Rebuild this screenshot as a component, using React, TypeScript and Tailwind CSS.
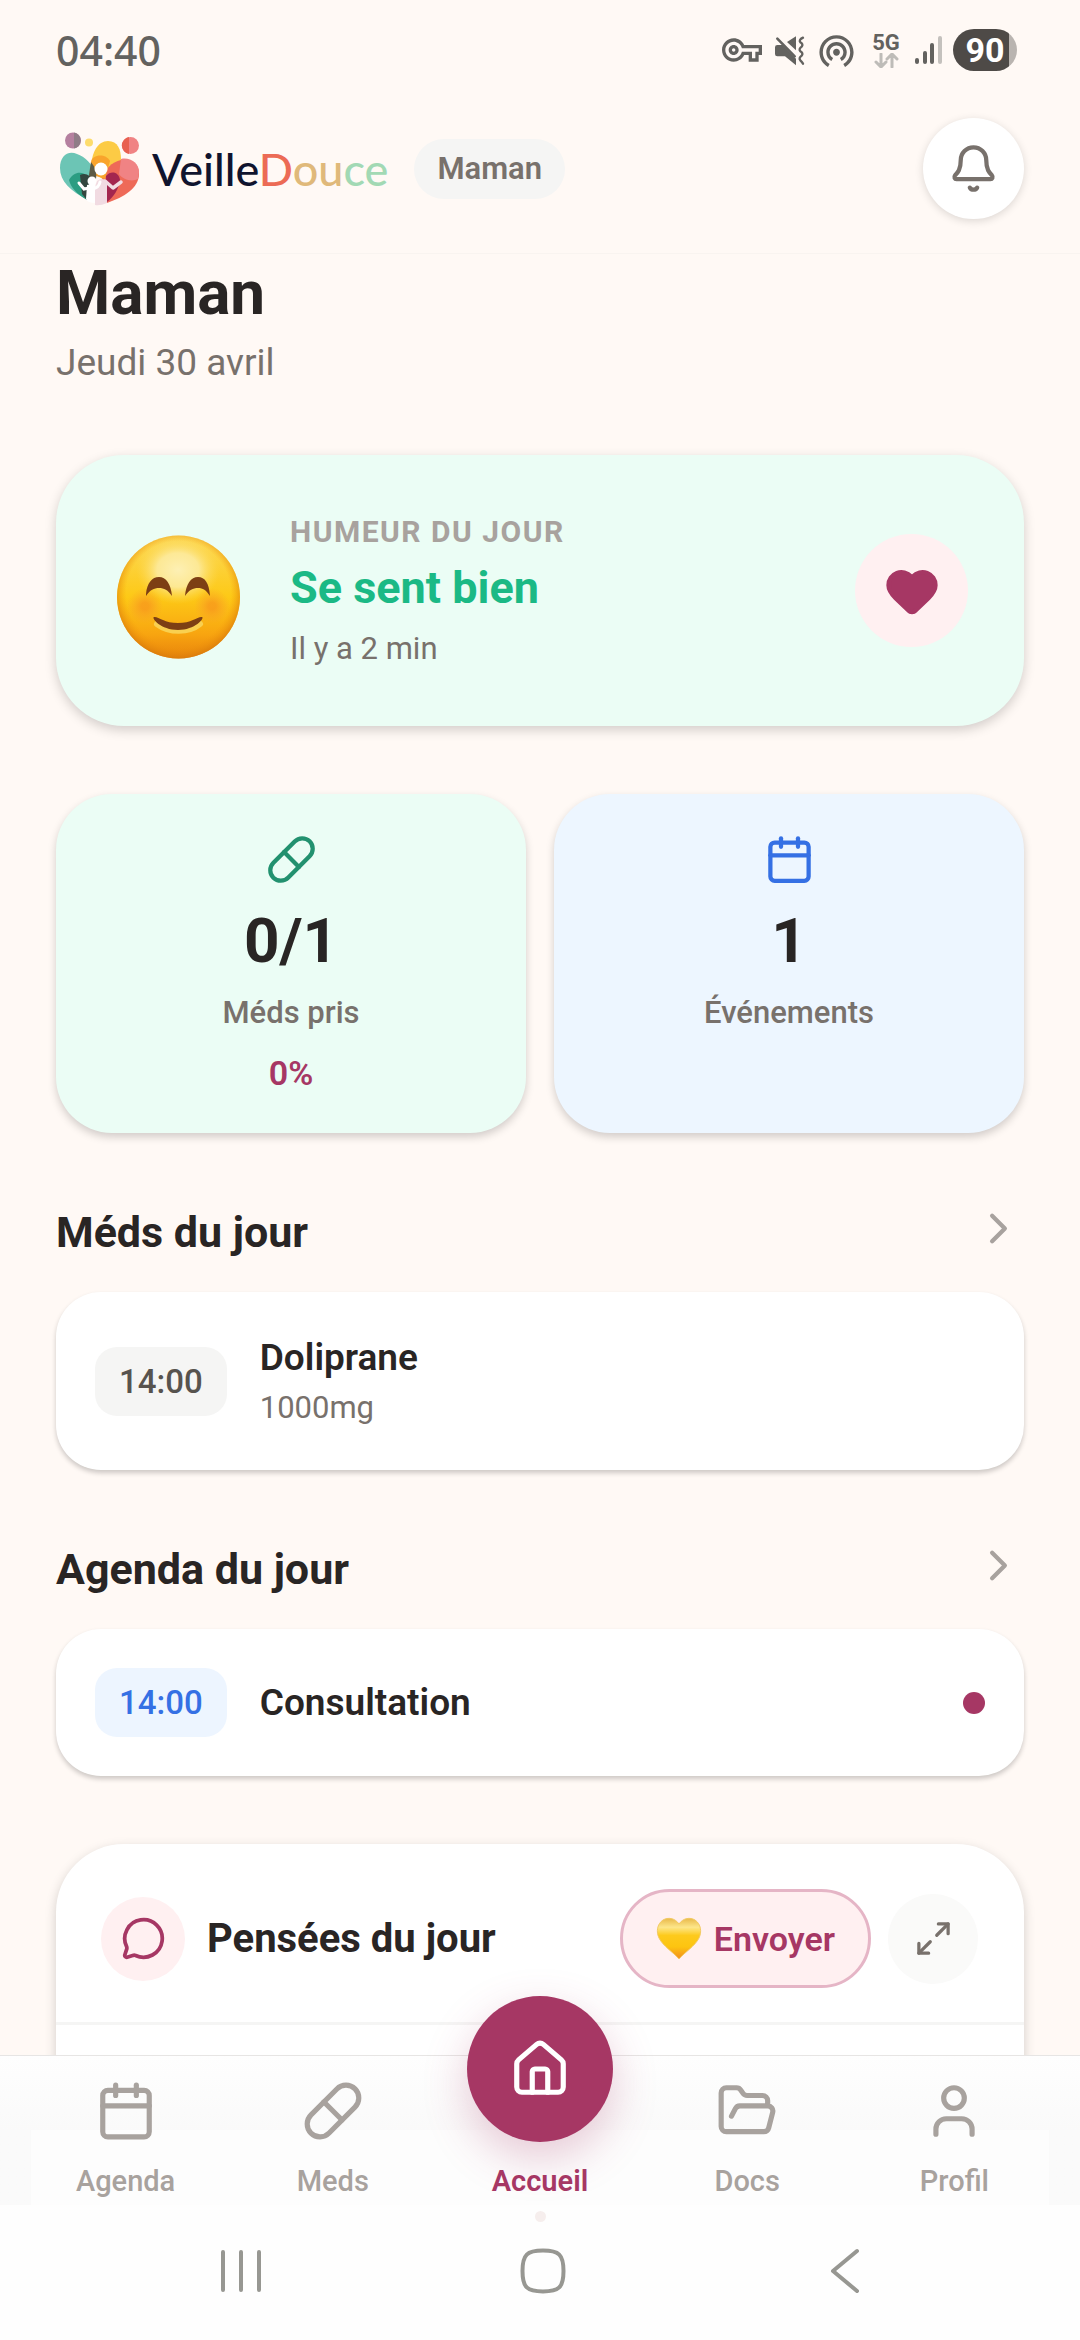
import type { ReactNode } from 'react';
import { Bell, Calendar, ChevronRight, FolderOpen, Heart, House, Maximize2, MessageCircle, Pill, User } from 'lucide-react';
import type { LucideIcon } from 'lucide-react';
import { MdOutlineVpnKey, MdWifiTethering } from 'react-icons/md';

const tabs: { label: string; Icon: LucideIcon; active?: boolean }[] = [
    { label: 'Agenda', Icon: Calendar },
    { label: 'Meds', Icon: Pill },
    { label: 'Accueil', Icon: House, active: true },
    { label: 'Docs', Icon: FolderOpen },
    { label: 'Profil', Icon: User },
];

const MuteIcon = () => (
    <svg viewBox="276 102 96 99" className="w-8 h-[33px]" fill="currentColor" aria-hidden="true">
        <path d="M345 109v42l-27-25z" />
        <path d="M289 135h16l40 41v20l-33-27h-23q-7 0-7-7v-20q0-7 7-7z" />
        <path d="M289 116l52 53" stroke="currentColor" strokeWidth="8" strokeLinecap="round" />
        <path d="M366 113q-14 7-8 14 10 6 4 13-10 7-4 14 10 6 4 13-10 7-4 14 5 5 8 10" fill="none" stroke="currentColor" strokeWidth="7" strokeLinecap="round" />
    </svg>
);

const StatusBar = () => (
    <div className="flex items-center justify-between h-[84px] pt-4 pl-14 pr-[63px] text-[#63625f]">
        <span className="text-[41px] leading-[48px] font-medium font-['Noto_Sans',sans-serif]">04:40</span>
        <div className="flex items-center gap-[11px]">
            <MdOutlineVpnKey size={40} />
            <MuteIcon />
            <MdWifiTethering size={41} />
            <div className="flex flex-col items-center w-9">
                <span className="text-[22px] leading-5 font-bold">5G</span>
                <svg viewBox="0 0 25 15" className="w-[25px] h-[15px] text-[#bebcb8]" fill="none" stroke="currentColor" strokeWidth="3" strokeLinecap="round" strokeLinejoin="round" aria-hidden="true">
                    <path d="M7 1v12M2 9l5 5 5-5M18 14V2M13 6l5-5 5 5" />
                </svg>
            </div>
            <svg viewBox="0 0 27 30" className="w-[27px] h-[30px]" strokeWidth="4" strokeLinecap="round" aria-hidden="true">
                <path d="M2 25v2M10 18v9M17 10v17" stroke="#63625f" />
                <path d="M25 3v24" stroke="#c4c1bd" />
            </svg>
            <div className="flex items-center justify-center w-16 h-[42px] rounded-full bg-[linear-gradient(90deg,#4e4a47_88%,#b9b4b0_88%)] text-white text-[34px] leading-10 font-bold">90</div>
        </div>
    </div>
);

const LogoMark = () => (
    <svg viewBox="0 0 80 74" className="w-20 h-[74px]" aria-hidden="true">
        <circle cx="13" cy="8.5" r="8" fill="#b5809f" />
        <path d="M14 .6a8 8 0 0 1 0 15.8z" fill="#8f7c86" />
        <circle cx="29" cy="10.5" r="4" fill="#fddc6c" />
        <circle cx="70.5" cy="13.5" r="8.5" fill="#f08384" />
        <path d="M69 5.1a8.5 8.5 0 0 0 0 16.8z" fill="#e8604f" />
        {/* petals */}
        <path d="M31 38C31 20 38 9 48 9s13 9 13 18c0 8-6 18-16 22z" fill="#fccb45" />
        <path d="M0 36C0 24 8 18 17 22c8 3 15 9 18 19l-7 27C10 59 0 49 0 36z" fill="#6cc5b5" />
        <path d="M79 42c0-11-9-16-18-14-9 2-17 9-19 20l5 23c17-6 32-15 32-29z" fill="#ee6a58" />
        <path d="M79 40c0-9-9-15-18-13l-2 15c4 6 13 8 19 5z" fill="#f08384" />
        {/* overlaps */}
        <path d="M31 30c1-8 15-9 19-1l-5 18-12-4z" fill="#f9a42c" />
        <path d="M31 30c4 5 6 10 5 17l-8 2z" fill="#5e5b45" />
        <path d="M9 48c5-9 14-9 19-3l-1 23C17 62 11 56 9 48z" fill="#2b9d82" />
        <path d="M20 43c6-3 11 1 12 6l-5 19-5-6z" fill="#33463f" />
        <path d="M46 44c5-6 13-4 14 4-1 8-6 17-13 22z" fill="#a3264f" />
        {/* two people hugging */}
        <circle cx="41" cy="37" r="6.5" fill="#fff" />
        <circle cx="32" cy="49" r="4.5" fill="#fff" />
        <path d="M27 53c4-1 7-1 9 0v18q-9 0-10-4z" fill="#fff" />
        <path d="M19 51l5 6 5-1" fill="none" stroke="#fff" strokeWidth="3" strokeLinecap="round" />
        <path d="M37 49q5-4 10 0v22q-7 3-12 2V55z" fill="#f1dbe2" />
        <path d="M45 49l8 7 8-6" fill="none" stroke="#f1dbe2" strokeWidth="3.5" strokeLinecap="round" strokeLinejoin="round" />
        <path d="M32 57q7-1 8-7" fill="none" stroke="#fff" strokeWidth="3" strokeLinecap="round" />
    </svg>
);

const SmileEmoji = () => (
    <svg viewBox="0 0 128 136" className="w-32 h-[136px] shrink-0" role="img" aria-label="Souriant">
        <defs>
            <linearGradient id="face" x1="0" y1="0" x2="0" y2="1">
                <stop offset="0" stopColor="#fcd95a" />
                <stop offset="0.5" stopColor="#fdc916" />
                <stop offset="0.8" stopColor="#f8a510" />
                <stop offset="1" stopColor="#e8820c" />
            </linearGradient>
            <radialGradient id="shine" cx="0.5" cy="0.5" r="0.5">
                <stop offset="0" stopColor="#fdf0b4" />
                <stop offset="0.5" stopColor="#fdeb9f" stopOpacity="0.9" />
                <stop offset="1" stopColor="#fdd94f" stopOpacity="0" />
            </radialGradient>
            <radialGradient id="edge" cx="0.5" cy="0.47" r="0.53">
                <stop offset="0.8" stopColor="#f59b0b" stopOpacity="0" />
                <stop offset="1" stopColor="#d97b0c" stopOpacity="0.85" />
            </radialGradient>
            <radialGradient id="cheek">
                <stop offset="0.2" stopColor="#f7931e" stopOpacity="0.7" />
                <stop offset="1" stopColor="#f9a030" stopOpacity="0" />
            </radialGradient>
        </defs>
        <circle cx="66.5" cy="74" r="61.5" fill="url(#face)" />
        <ellipse cx="66" cy="47" rx="42" ry="34" fill="url(#shine)" />
        <circle cx="66.5" cy="74" r="61.5" fill="url(#edge)" />
        <circle cx="33" cy="83" r="18" fill="url(#cheek)" />
        <circle cx="100" cy="83" r="18" fill="url(#cheek)" />
        <path d="M34 71C35 60 40 54 47 54S59 61 60 73C56 67 52 65 47 65S38 67 34 73z" fill="#7d3f14" />
        <path d="M73 73C74 61 79 54 86 54S97 60 98 73C94 67 91 65 86 65S77 67 73 73z" fill="#7d3f14" />
        <path d="M45 101c12 9 32 9 43 0" fill="none" stroke="#f9d050" strokeWidth="6" strokeLinecap="round" />
        <path d="M42 94c4-1 10 6 24 6s20-7 24-6c3 1-7 13-24 13S39 95 42 94z" fill="#7d3f14" />
    </svg>
);

const YellowHeart = () => (
    <svg viewBox="0 0 46 44" className="w-[46px] h-11" aria-hidden="true">
        <defs>
            <linearGradient id="gold" x1="0" y1="0" x2="0" y2="1">
                <stop offset="0" stopColor="#e9b94a" />
                <stop offset="0.22" stopColor="#fde68a" />
                <stop offset="0.42" stopColor="#fdca1c" />
                <stop offset="0.7" stopColor="#fdc410" />
                <stop offset="1" stopColor="#f28c1f" />
            </linearGradient>
        </defs>
        <path d="M23 7C19 1 12 0 7 3 1 7 0 15 3 21c4 8 14 14 20 21 6-7 16-13 20-21 3-6 2-14-4-18-5-3-12-2-16 4z" fill="url(#gold)" stroke="#f3ca63" strokeWidth="1" />
    </svg>
);

const Header = () => (
    <header className="flex items-center justify-between pl-[60px] pr-14 py-[34px] border-b border-[#f9f4f0]">
        <div className="flex items-center">
            <LogoMark />
            <span className="ml-3 text-[45px] leading-[52px] font-medium font-['Lato',sans-serif] text-[#10142e]">
                Veille<span className="text-[#ec6b55]">D</span><span className="text-[#e0b97a]">ou</span><span className="text-[#a2d9b4]">ce</span>
            </span>
            <span className="ml-[26px] px-[23px] py-3 rounded-full bg-stone-100 text-[31px] leading-9 font-semibold text-[#78716c]">Maman</span>
        </div>
        <button type="button" aria-label="Notifications" className="flex items-center justify-center w-[101px] h-[101px] rounded-full bg-white text-[#78716c] shadow-[0_2px_8px_rgba(0,0,0,0.14)]">
            <Bell size={51} />
        </button>
    </header>
);

const MoodCard = () => (
    <section className="flex items-center mt-[70px] px-14 py-[59px] rounded-[68px] bg-[#ebfdf5] shadow-[0_4px_12px_rgba(0,0,0,0.18)]">
        <SmileEmoji />
        <div className="flex-1 ml-[50px]">
            <p className="text-[30px] leading-9 font-bold tracking-wider text-[#a8a29e]">HUMEUR DU JOUR</p>
            <p className="mt-3 text-[45px] leading-[52px] font-bold text-[#1bb985]">Se sent bien</p>
            <p className="mt-[17px] text-[31px] leading-9 text-[#78716c]">Il y a 2 min</p>
        </div>
        <button type="button" aria-label="Envoyer un coeur" className="flex items-center justify-center w-[113px] h-[113px] rounded-full bg-[#fff0f1] text-[#a63764]">
            <Heart size={56} fill="currentColor" />
        </button>
    </section>
);

const StatCard = ({ icon, value, label, percent, tone }: { icon: ReactNode; value: string; label: string; percent?: string; tone: string }) => (
    <div className={`flex flex-col items-center py-10 rounded-[56px] shadow-[0_4px_8px_rgba(0,0,0,0.18)] ${tone}`}>
        {icon}
        <p className="mt-5 text-[62px] leading-[72px] font-bold text-[#292524]">{value}</p>
        <p className="mt-[18px] text-[31px] leading-9 font-medium text-[#78716c]">{label}</p>
        {percent && <p className="mt-[22px] text-[34px] leading-10 font-semibold text-[#a63764]">{percent}</p>}
    </div>
);

const DaySection = ({ title, children }: { title: string; children: ReactNode }) => (
    <section className="mt-[70px]">
        <div className="flex items-start justify-between">
            <h2 className="text-[43px] leading-[58px] font-bold text-[#292524]">{title}</h2>
            <button type="button" aria-label={`Voir ${title}`} className="text-[#a8a29e]">
                <ChevronRight size={51} />
            </button>
        </div>
        <div className="flex items-center mt-[31px] px-[39px] py-[39px] rounded-[45px] bg-white shadow-[0_3px_5px_rgba(0,0,0,0.2)]">
            {children}
        </div>
    </section>
);

const Thoughts = () => (
    <section className="mt-[68px] h-[400px] rounded-[68px] bg-white shadow-[0_4px_12px_rgba(0,0,0,0.18)]">
        <div className="flex items-center pt-[45px] pb-[34px] pl-[45px] pr-[46px] border-b-[3px] border-stone-100">
            <span className="flex items-center justify-center w-[84px] h-[84px] rounded-full bg-[#fff0f1] text-[#a63764]">
                <MessageCircle size={45} />
            </span>
            <h2 className="flex-1 ml-[22px] text-[40px] leading-[48px] font-bold text-[#292524]">Pensées du jour</h2>
            <button type="button" className="flex items-center justify-center gap-3 h-[99px] px-[33px] rounded-full border-[3px] border-[#e5b5c6] bg-[#fff0f1] text-[34px] leading-10 font-semibold text-[#a63764]">
                <YellowHeart />
                Envoyer
            </button>
            <button type="button" aria-label="Agrandir" className="flex items-center justify-center ml-[17px] w-[90px] h-[90px] rounded-full bg-[#fafaf9] text-[#78716c]">
                <Maximize2 size={39} />
            </button>
        </div>
    </section>
);

const TabBar = () => (
    <nav className="relative h-[150px] pt-6 px-[22px] border-t border-[#e7e5e4] bg-linear-to-b from-[#fefefe] to-[#fafafa] to-50%">
        <div className="absolute inset-x-[31px] bottom-0 h-[75px] bg-[#fdfdfd]" />
        <ul className="relative grid grid-cols-5">
            {tabs.map(({ label, Icon, active }) => (
                <li key={label}>
                    <a href={`#${label.toLowerCase()}`} className={active ? 'flex flex-col items-center text-[#a63764]' : 'flex flex-col items-center text-[#a8a29e]'}>
                        {active ? (
                            <span className="flex items-center justify-center w-[146px] h-[146px] -mt-[84px] rounded-full bg-[#a63764] text-white shadow-[0_16px_44px_rgba(166,55,100,0.26)]">
                                <Icon size={62} />
                            </span>
                        ) : (
                            <Icon size={62} />
                        )}
                        <span className={active ? 'mt-[22px] text-[29px] leading-[34px] font-semibold' : 'mt-[22px] text-[29px] leading-[34px] font-medium'}>{label}</span>
                    </a>
                </li>
            ))}
        </ul>
    </nav>
);

const SystemNav = () => (
    <div className="h-[135px] bg-[#fefefe] text-[#979792]">
        <div className="mx-auto mt-[6px] w-[11px] h-[11px] rounded-full bg-[#f6eeed]" />
        <div className="grid grid-cols-3 items-center mt-[26px] pl-[90px] pr-[84px]">
            <button type="button" aria-label="Applications récentes" className="mx-auto">
                <svg viewBox="0 0 40 46" className="w-10 h-[46px]" fill="none" stroke="currentColor" strokeWidth="4" strokeLinecap="round">
                    <path d="M2 4v38M20 4v38M38 4v38" />
                </svg>
            </button>
            <button type="button" aria-label="Accueil du téléphone" className="mx-auto">
                <svg viewBox="0 0 46 46" className="w-[46px] h-[46px]" fill="none" stroke="currentColor" strokeWidth="4">
                    <path d="M23 2.5c16 0 20.500 4 20.500 20.500S39 43.500 23 43.500 2.500 39.500 2.500 23 7 2.500 23 2.500z" />
                </svg>
            </button>
            <button type="button" aria-label="Retour" className="mx-auto">
                <svg viewBox="0 0 30 46" className="w-[30px] h-[46px]" fill="none" stroke="currentColor" strokeWidth="4" strokeLinecap="round" strokeLinejoin="round">
                    <path d="M27 3L3 23l24 20" />
                </svg>
            </button>
        </div>
    </div>
);

const App = () => {
    return (
        <div className="flex flex-col h-screen overflow-hidden bg-[#fff9f5] font-['Roboto',sans-serif]">
            <StatusBar />
            <Header />
            <main className="flex-1 min-h-0 overflow-hidden px-14 pt-[3px]">
                <h1 className="text-[62px] leading-[72px] font-bold text-[#292524]">Maman</h1>
                <p className="mt-3 text-[37px] leading-[44px] text-[#78716c]">Jeudi 30 avril</p>
                <MoodCard />
                <div className="grid grid-cols-2 gap-7 mt-[68px]">
                    <StatCard tone="bg-[#ebfdf5]" icon={<Pill size={51} className="text-[#22916f]" />} value="0/1" label="Méds pris" percent="0%" />
                    <StatCard tone="bg-[#edf6ff]" icon={<Calendar size={51} className="text-[#3570e4]" />} value="1" label="Événements" />
                </div>
                <DaySection title="Méds du jour">
                    <time className="px-6 py-[14px] rounded-[22px] bg-stone-100 text-[33px] leading-[41px] font-medium text-[#57534e]">14:00</time>
                    <div className="ml-[33px] py-[5px]">
                        <p className="text-[37px] leading-[44px] font-semibold text-[#292524]">Doliprane</p>
                        <p className="mt-[10px] text-[31px] leading-9 text-[#78716c]">1000mg</p>
                    </div>
                </DaySection>
                <DaySection title="Agenda du jour">
                    <time className="px-6 py-[14px] rounded-[22px] bg-[#edf5ff] text-[33px] leading-[41px] font-medium text-[#3570e4]">14:00</time>
                    <p className="flex-1 ml-[33px] text-[37px] leading-[44px] font-semibold text-[#292524]">Consultation</p>
                    <span className="w-[22px] h-[22px] rounded-full bg-[#a63764]" />
                </DaySection>
                <Thoughts />
            </main>
            <TabBar />
            <SystemNav />
        </div>
    )
}

export default App
